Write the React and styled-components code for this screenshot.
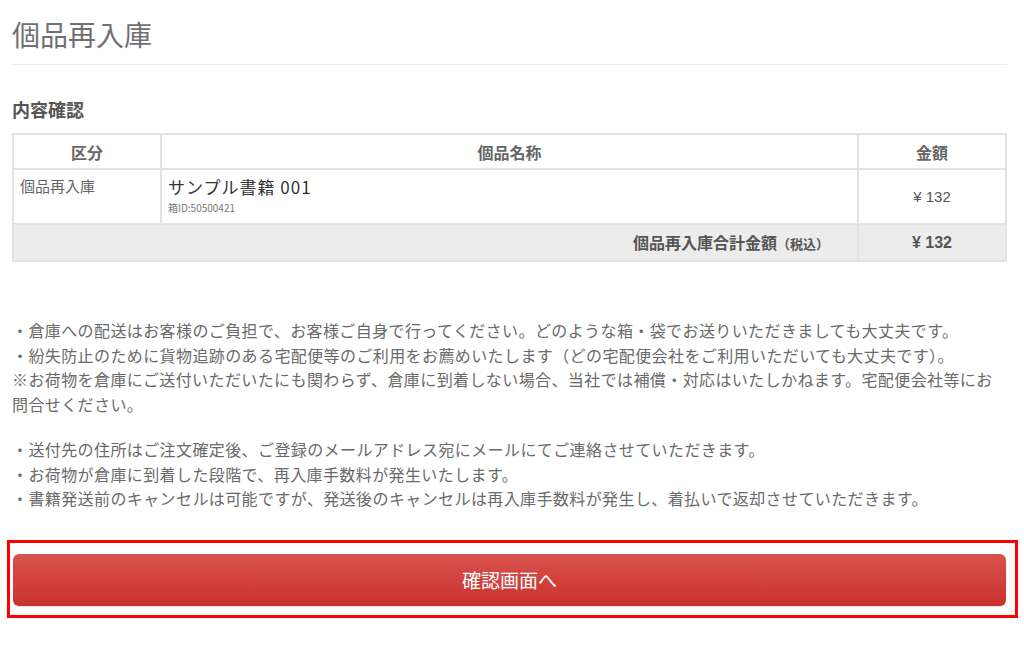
import React from "react";
import styled, { createGlobalStyle } from "styled-components";

const GlobalStyle = createGlobalStyle`
  body {
    margin: 0;
    background: #fff;
    font-family: "Noto Sans CJK JP", "Noto Sans", sans-serif;
    color: #666;
  }
`;

const Page = styled.div`
  padding: 0 17px 40px 12px;
`;

const Title = styled.h1`
  margin: 0;
  padding: 16px 0 12px;
  font-size: 28px;
  line-height: 36px;
  font-weight: 400;
  color: #707070;
  border-bottom: 1px solid #ebebeb;
`;

const SectionTitle = styled.h2`
  margin: 30px 0 0;
  font-size: 18px;
  line-height: 28px;
  font-weight: 700;
  color: #555;
`;

const Table = styled.table`
  margin-top: 10px;
  width: 100%;
  border-collapse: collapse;
  border: 2px solid #e3e3e3;
  font-size: 15px;
  table-layout: fixed;
`;

const Th = styled.th`
  height: 33px;
  padding: 0;
  border: 2px solid #e3e3e3;
  font-weight: 700;
  font-size: 16px;
  line-height: 20px;
  color: #666;
  text-align: center;
  width: ${(p) => p.$w || "auto"};
`;

const Td = styled.td`
  border: 2px solid #e3e3e3;
  vertical-align: ${(p) => p.$valign || "middle"};
  text-align: ${(p) => p.$align || "left"};
  padding: ${(p) => p.$pad || "0 6px"};
  background: ${(p) => (p.$total ? "#ececec" : "#fff")};
  height: ${(p) => p.$h || "auto"};
  line-height: 20px;
  color: #666;
`;

const ItemName = styled.div`
  font-size: 17px;
  line-height: 22px;
  letter-spacing: 1px;
  color: #333;
`;

const ItemSub = styled.div`
  font-size: 10px;
  line-height: 14px;
  margin-top: 3px;
  color: #777;
`;

const Price = styled.span`
  font-family: "Liberation Sans", Arial, sans-serif;
  font-size: ${(p) => (p.$bold ? "16px" : "15px")};
  font-weight: ${(p) => (p.$bold ? 700 : 400)};
  color: #555;
`;

const TotalLabel = styled.span`
  font-weight: 700;
  font-size: 16px;
  color: #555;
`;

const TaxNote = styled.span`
  font-size: 13px;
  font-weight: 700;
  margin-right: 22px;
  color: #555;
`;

const Notes = styled.div`
  margin-top: 56px;
  font-size: 16px;
  line-height: 24.5px;
  letter-spacing: 0.4px;
  color: #6a6a6a;
`;

const NoteBlock = styled.p`
  margin: 0 0 21px;
`;

const ButtonFrame = styled.div`
  margin: 29px -11px 0 -5px;
  border: 3px solid #ff0000;
  padding: 11px 9px 9px 3px;
`;

const SubmitButton = styled.button`
  display: block;
  width: 100%;
  height: 52px;
  border: none;
  border-radius: 6px;
  background: linear-gradient(to bottom, #d9534f 0%, #c9302c 100%);
  box-shadow: 0 1px 2px rgba(0, 0, 0, 0.15);
  color: #fff;
  font-family: "Noto Sans CJK JP", sans-serif;
  font-size: 19px;
  cursor: pointer;
`;

export default function App() {
  return (
    <>
      <GlobalStyle />
      <Page>
        <Title>個品再入庫</Title>
        <SectionTitle>内容確認</SectionTitle>
        <Table>
          <thead>
            <tr>
              <Th $w="146px">区分</Th>
              <Th>個品名称</Th>
              <Th $w="146px">金額</Th>
            </tr>
          </thead>
          <tbody>
            <tr>
              <Td $valign="top" $pad="6px 6px 0" $h="47px">個品再入庫</Td>
              <Td $valign="top" $pad="6px 6px 0">
                <ItemName>サンプル書籍 001</ItemName>
                <ItemSub>箱ID:50500421</ItemSub>
              </Td>
              <Td $align="center">
                <Price>¥ 132</Price>
              </Td>
            </tr>
            <tr>
              <Td colSpan={2} $total $align="right" $h="35px">
                <TotalLabel>個品再入庫合計金額</TotalLabel>
                <TaxNote>（税込）</TaxNote>
              </Td>
              <Td $total $align="center">
                <Price $bold>¥ 132</Price>
              </Td>
            </tr>
          </tbody>
        </Table>
        <Notes>
          <NoteBlock>
            ・倉庫への配送はお客様のご負担で、お客様ご自身で行ってください。どのような箱・袋でお送りいただきましても大丈夫です。
            <br />
            ・紛失防止のために貨物追跡のある宅配便等のご利用をお薦めいたします（どの宅配便会社をご利用いただいても大丈夫です）。
            <br />
            ※お荷物を倉庫にご送付いただいたにも関わらず、倉庫に到着しない場合、当社では補償・対応はいたしかねます。宅配便会社等にお問合せください。
          </NoteBlock>
          <NoteBlock>
            ・送付先の住所はご注文確定後、ご登録のメールアドレス宛にメールにてご連絡させていただきます。
            <br />
            ・お荷物が倉庫に到着した段階で、再入庫手数料が発生いたします。
            <br />
            ・書籍発送前のキャンセルは可能ですが、発送後のキャンセルは再入庫手数料が発生し、着払いで返却させていただきます。
          </NoteBlock>
        </Notes>
        <ButtonFrame>
          <SubmitButton type="button">確認画面へ</SubmitButton>
        </ButtonFrame>
      </Page>
    </>
  );
}
